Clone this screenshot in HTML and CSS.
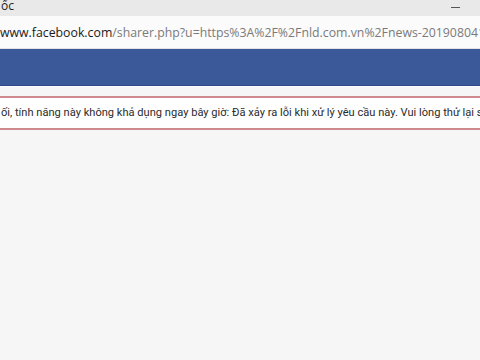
FILE: index.html
```
<!DOCTYPE html>
<html>
<head>
<meta charset="utf-8">
<link rel="stylesheet" href="styles.css">
</head>
<body>
<div class="titlebar">
  <span class="title">ốc</span>
  <span class="minimize"></span>
</div>
<div class="addressbar">
  <span class="url"><span class="host">www.facebook.com</span>/sharer.php?u=https%3A%2F%2Fnld.com.vn%2Fnews-20190804123456789.htm</span>
</div>
<div class="fbbar"></div>
<div class="page">
  <div class="error">ối, tính năng này không khả dụng ngay bây giờ: Đã xảy ra lỗi khi xử lý yêu cầu này. Vui lòng thử lại sau.</div>
</div>
</body>
</html>
```
FILE: styles.css
```
html, body {
  margin: 0;
  padding: 0;
  width: 480px;
  height: 360px;
  overflow: hidden;
  background: #f8f8f8;
}
.titlebar {
  height: 16px;
  background: #e9e9e9;
  display: flex;
  align-items: center;
  justify-content: space-between;
}
.title {
  font-family: "Open Sans", sans-serif;
  font-size: 12px;
  color: #222;
  padding-left: 1px;
  line-height: 16px;
  margin-top: -4px;
}
.minimize {
  width: 9px;
  height: 1px;
  background: #555;
  margin-right: 20px;
  margin-top: -2px;
}
.addressbar {
  height: 33px;
  background: #fbfbfb;
  display: flex;
  align-items: center;
  white-space: nowrap;
  overflow: hidden;
  border-bottom: 1px solid #e2e2e2;
  box-sizing: border-box;
  padding-top: 1px;
}
.url {
  font-family: "Open Sans", sans-serif;
  font-size: 12.3px;
  color: #7a7a7a;
}
.host {
  color: #1a1a1a;
}
.fbbar {
  height: 36px;
  background: #3b5998;
  border-bottom: 1px solid #2f4a86;
}
.page {
  background: #f7f6f7;
  padding-top: 9px;
  height: 264px;
  border-top: 1px solid #ffffff;
}
.error {
  background: #ffffff;
  border-top: 2px solid #cf8a8e;
  border-bottom: 2px solid #cf8a8e;
  height: 30px;
  line-height: 30px;
  font-family: Roboto, sans-serif;
  font-size: 11.1px;
  color: #2b2b2b;
  white-space: nowrap;
  overflow: hidden;
  padding-left: 1px;
}
```
